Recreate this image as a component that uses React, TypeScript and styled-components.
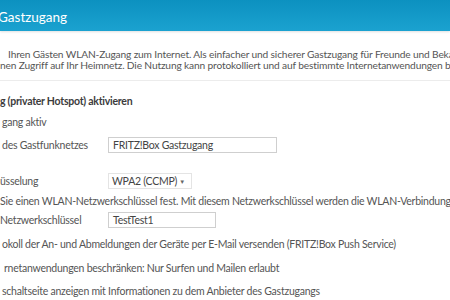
import React from 'react'
import styled, { createGlobalStyle } from 'styled-components'

const GlobalStyle = createGlobalStyle`
    html, body {
        margin: 0;
        padding: 0;
        background: #ffffff;
        overflow: hidden;
    }
    body {
        font-family: Lato, 'Noto Sans', sans-serif;
        color: #555555;
    }
`

const Page = styled.div`
    width: 450px;
    height: 300px;
    overflow: hidden;
    background: #ffffff;
`

const Header = styled.div`
    height: 31px;
    background: linear-gradient(#0c91c0, #1ba2d0);
    color: #ffffff;
    font-size: 13.5px;
    line-height: 34px;
    text-indent: -2px;
    box-shadow: 0 1px 2px rgba(0, 0, 0, 0.12);
    white-space: nowrap;
    overflow: hidden;
`

const Intro = styled.div`
    padding-top: 18px;
    height: 31px;
    border-bottom: 1px solid #ececec;
    overflow: hidden;
`

const IntroLine = styled.div<{ indent?: number }>`
    font-size: 10.2px;
    letter-spacing: -0.15px;
    line-height: 11px;
    white-space: nowrap;
    overflow: hidden;
    padding-left: ${p => p.indent ?? 0}px;
`

const Section = styled.div`
    display: flex;
    flex-direction: column;
    padding-top: 10px;
`

const Row = styled.div<{ h: number; indent?: number; bold?: boolean }>`
    height: ${p => p.h}px;
    display: flex;
    align-items: center;
    padding-left: ${p => p.indent ?? 0}px;
    font-size: 10.5px;
    letter-spacing: -0.25px;
    white-space: nowrap;
    overflow: hidden;
    font-weight: ${p => (p.bold ? 700 : 400)};
    color: ${p => (p.bold ? '#3c3c3c' : '#555555')};
`

const Label = styled.span<{ w: number }>`
    width: ${p => p.w}px;
    flex-shrink: 0;
`

const TextField = styled.div<{ w: number }>`
    width: ${p => p.w}px;
    height: 16px;
    box-sizing: border-box;
    border: 1px solid #cfcfcf;
    padding-left: 4px;
    display: flex;
    align-items: center;
    color: #444444;
`

const Select = styled.div`
    width: 84px;
    height: 16px;
    box-sizing: border-box;
    border: 1px solid #e4e4e4;
    padding: 0 6px 0 3px;
    display: flex;
    align-items: center;
    justify-content: space-between;
    color: #444444;
`

const Caret = styled.span`
    font-size: 6px;
    color: #666666;
`

export default function App() {
    return (
        <Page>
            <GlobalStyle />
            <Header>Gastzugang</Header>
            <Intro>
                <IntroLine indent={8}>
                    Ihren Gästen WLAN-Zugang zum Internet. Als einfacher und sicherer Gastzugang für Freunde und Bekannte
                </IntroLine>
                <IntroLine>
                    nen Zugriff auf Ihr Heimnetz. Die Nutzung kann protokolliert und auf bestimmte Internetanwendungen beschränkt werden.
                </IntroLine>
            </Intro>
            <Section>
                <Row h={20} bold>g (privater Hotspot) aktivieren</Row>
                <Row h={22} indent={2}>gang aktiv</Row>
                <Row h={24} indent={2}>
                    <Label w={106}>des Gastfunknetzes</Label>
                    <TextField w={169}>FRITZ!Box Gastzugang</TextField>
                </Row>
                <Row h={12} />
                <Row h={24}>
                    <Label w={108}>üsselung</Label>
                    <Select>
                        WPA2 (CCMP)
                        <Caret>▼</Caret>
                    </Select>
                </Row>
                <Row h={16}>
                    Sie einen WLAN-Netzwerkschlüssel fest. Mit diesem Netzwerkschlüssel werden die WLAN-Verbindungen
                </Row>
                <Row h={22}>
                    <Label w={108}>Netzwerkschlüssel</Label>
                    <TextField w={108}>TestTest1</TextField>
                </Row>
                <Row h={25} indent={2}>
                    okoll der An- und Abmeldungen der Geräte per E-Mail versenden (FRITZ!Box Push Service)
                </Row>
                <Row h={23} indent={4}>rnetanwendungen beschränken: Nur Surfen und Mailen erlaubt</Row>
                <Row h={23} indent={2}>schaltseite anzeigen mit Informationen zu dem Anbieter des Gastzugangs</Row>
            </Section>
        </Page>
    )
}
